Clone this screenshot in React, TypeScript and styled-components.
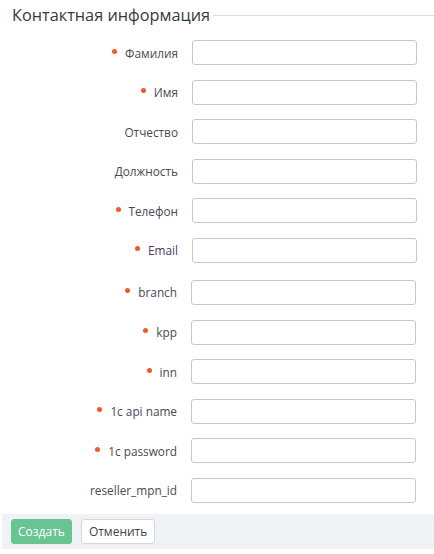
import React from "react";
import styled, { createGlobalStyle } from "styled-components";

const Global = createGlobalStyle`
  html, body { margin: 0; padding: 0; background: #ffffff; }
  body { font-family: "Open Sans", "Noto Sans", sans-serif; }
  * { box-sizing: border-box; }
`;

const Page = styled.div`
  width: 434px;
  height: 554px;
  background: #fff;
  display: flex;
  flex-direction: column;
`;

const Legend = styled.div`
  display: flex;
  align-items: center;
  height: 30px;
  padding-left: 12px;
`;

const Title = styled.span`
  font-size: 16.3px;
  line-height: 20px;
  color: #333a40;
  margin-top: -1px;
`;

const Rule = styled.span`
  flex: 1;
  height: 1px;
  background: #d9dde2;
  margin-left: 3px;
`;

const Group = styled.div<{ $top: number; $shift: number }>`
  display: grid;
  grid-template-columns: ${(p) => 178 - p.$shift}px 225px;
  column-gap: 14px;
  row-gap: 14.6px;
  margin-top: ${(p) => p.$top}px;
  align-items: center;
`;

const Label = styled.label<{ $tone?: string }>`
  display: flex;
  justify-content: flex-end;
  align-items: center;
  gap: 8px;
  font-size: 11.8px;
  color: ${(p) => p.$tone || "#454c55"};
  white-space: nowrap;
`;

const Dot = styled.span`
  width: 5px;
  height: 5px;
  border-radius: 50%;
  background: #f05a2a;
  margin-top: -3px;
`;

const Input = styled.input`
  height: 25px;
  width: 225px;
  border: 1px solid #c3c8d0;
  border-radius: 3px;
  background: #fff;
  outline: none;
  font-family: inherit;
  font-size: 12px;
  padding: 0 6px;
`;

const Footer = styled.div`
  margin-top: 11px;
  margin-left: 2px;
  height: 35px;
  background: #f0f3f6;
  display: flex;
  align-items: center;
  gap: 9px;
  padding-left: 9px;
`;

const Button = styled.button<{ $primary?: boolean }>`
  height: 25px;
  padding: 0 ${(p) => (p.$primary ? 6 : 7)}px;
  border-radius: 3px;
  font-family: inherit;
  font-size: 12px;
  border: 1px solid ${(p) => (p.$primary ? "#68c591" : "#d4d8de")};
  background: ${(p) => (p.$primary ? "#68c591" : "#ffffff")};
  color: ${(p) => (p.$primary ? "#ffffff" : "#3c434b")};
  cursor: pointer;
`;

type Field = { label: string; required?: boolean; tone?: string };

const group1: Field[] = [
  { label: "Фамилия", required: true },
  { label: "Имя", required: true },
  { label: "Отчество" },
  { label: "Должность" },
  { label: "Телефон", required: true },
  { label: "Email", required: true, tone: "#4e3364" },
];

const group2: Field[] = [
  { label: "branch", required: true },
  { label: "kpp", required: true },
  { label: "inn", required: true },
  { label: "1c api name", required: true },
  { label: "1c password", required: true },
  { label: "reseller_mpn_id" },
];

function Rows({ fields }: { fields: Field[] }) {
  return (
    <>
      {fields.map((f) => (
        <React.Fragment key={f.label}>
          <Label $tone={f.tone}>
            {f.required && <Dot />}
            {f.label}
          </Label>
          <Input type="text" />
        </React.Fragment>
      ))}
    </>
  );
}

export default function App() {
  return (
    <Page>
      <Global />
      <Legend>
        <Title>Контактная информация</Title>
        <Rule />
      </Legend>
      <Group $top={10} $shift={0}>
        <Rows fields={group1} />
      </Group>
      <Group $top={17} $shift={1}>
        <Rows fields={group2} />
      </Group>
      <Footer>
        <Button $primary>Создать</Button>
        <Button>Отменить</Button>
      </Footer>
    </Page>
  );
}
